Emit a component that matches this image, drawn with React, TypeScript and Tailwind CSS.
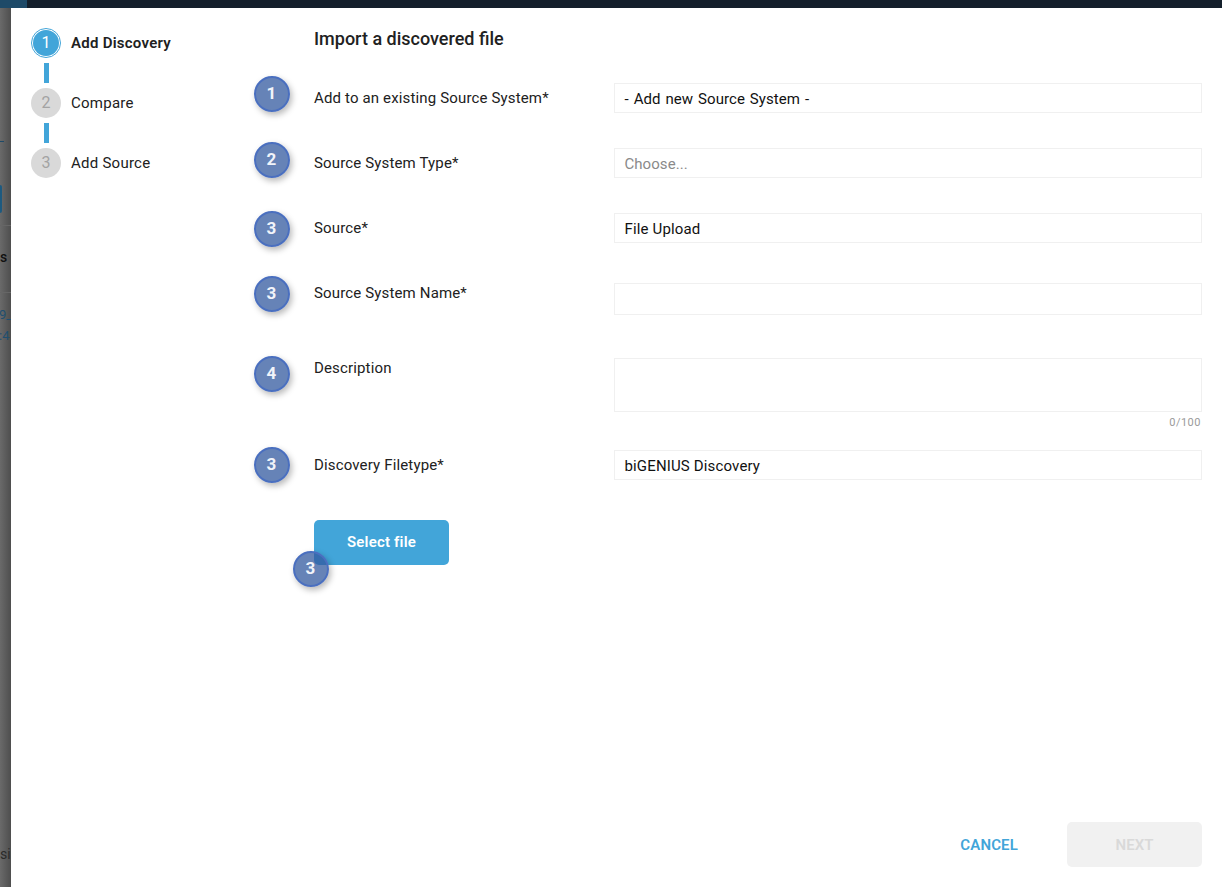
import React from "react";

function Badge({ n, className = "" }: { n: number; className?: string }) {
  return (
    <div
      className={
        "flex h-[36px] w-[36px] shrink-0 items-center justify-center rounded-full border-2 border-[#4a6fbf] bg-[#33599f]/75 pr-[1px] text-[17px] font-bold text-[#f1f4fa] shadow-[2px_3px_6px_rgba(0,0,0,0.28)] " +
        className
      }
    >
      {n}
    </div>
  );
}

function Step({ n, label, active }: { n: number; label: string; active?: boolean }) {
  return (
    <div className="flex h-[30px] items-center">
      {active ? (
        <div className="flex h-[30px] w-[30px] items-center justify-center rounded-full border border-[#42a5d9] bg-white">
          <div className="flex h-[26px] w-[26px] items-center justify-center rounded-full bg-[#42a5d9] text-[16px] text-white">{n}</div>
        </div>
      ) : (
        <div className="flex h-[30px] w-[30px] items-center justify-center rounded-full bg-[#d9d9d9] text-[16px] text-[#a3a3a3]">{n}</div>
      )}
      <span className={"ml-[10px] text-[15px] tracking-[0.25px] text-[#212121] " + (active ? "font-semibold" : "")}>{label}</span>
    </div>
  );
}

function Connector() {
  return <div className="my-[5px] ml-[13px] h-[20px] w-[5px] bg-[#42a5d9]" />;
}

function Row({
  n,
  label,
  value,
  placeholder,
  badgeClass,
  labelClass,
  rowClass,
  fieldClass,
}: {
  n: number;
  label: string;
  value?: string;
  placeholder?: string;
  badgeClass: string;
  labelClass: string;
  rowClass: string;
  fieldClass: string;
}) {
  return (
    <div className={"flex items-start " + rowClass}>
      <div className="w-[60px]">
        <Badge n={n} className={badgeClass} />
      </div>
      <div className={"w-[300px] text-[15px] leading-[20px] tracking-[0.15px] text-[#212121] " + labelClass}>{label}</div>
      <div
        className={
          "w-[588px] whitespace-pre border border-[#f0f0f0] pl-[9.5px] pt-[2px] text-[15px] " +
          (placeholder ? "text-[#8a8a8a] " : "text-[#111111] ") +
          fieldClass
        }
      >
        {value ?? placeholder}
      </div>
    </div>
  );
}

export default function App() {
  return (
    <div className="flex h-[887px] w-[1222px] flex-col overflow-hidden bg-white font-['Roboto',sans-serif]">
      <div className="flex h-[8px] shrink-0 bg-[#141f2b]">
        <div className="h-full w-[27px] bg-[#1e4a68]" />
      </div>
      <div className="flex flex-1">
        <div className="w-[11px] shrink-0 overflow-hidden bg-gradient-to-r from-[#6a6a6a] to-[#4e4e4e]">
          <div className="mt-[133px] h-[1px] w-[4px] bg-[#1d4a68]" />
          <div className="mt-[43px] h-[28px] w-[2px] rounded-r-sm bg-[#1d5a80]" />
          <div className="mt-[12px] h-[1px] w-full bg-[#666]" />
          <div className="mt-[21px] text-[14px] font-medium leading-[20px] text-[#111]">s</div>
          <div className="mt-[25px] h-[1px] w-full bg-[#666]" />
          <div className="mt-[11px] -ml-[1px] text-[13px] leading-[21px] text-[#1f4f70] whitespace-nowrap">9_<br />:4</div>
          <div className="mt-[498px] text-[14px] text-[#2a2a2a]">si</div>
        </div>

        <div className="relative flex flex-1">
          <div className="w-[243px] shrink-0 pl-[20px] pt-[20px]">
            <Step n={1} label="Add Discovery" active />
            <Connector />
            <Step n={2} label="Compare" />
            <Connector />
            <Step n={3} label="Add Source" />
          </div>

          <div className="flex flex-1 flex-col">
            <div className="pl-[60px] pt-[20px] text-[18px] font-medium leading-[22px] text-[#212121]">Import a discovered file</div>

            <Row n={1} label="Add to an existing Source System*" value="- Add new Source System -" rowClass="mt-[33px]" badgeClass="-mt-[7px]" labelClass="mt-[5px]" fieldClass="h-[30px] leading-[26px] tracking-[0.05px] [word-spacing:1.2px]" />
            <Row n={2} label="Source System Type*" placeholder="Choose..." rowClass="mt-[35px]" badgeClass="-mt-[6px]" labelClass="mt-[5px]" fieldClass="h-[30px] leading-[26px] tracking-[0.05px]" />
            <Row n={3} label="Source*" value="File Upload" rowClass="mt-[35px]" badgeClass="-mt-[2px]" labelClass="mt-[5px]" fieldClass="h-[30px] leading-[26px] tracking-[0.15px]" />
            <Row n={3} label="Source System Name*" rowClass="mt-[36px]" badgeClass="-mt-[7px]" labelClass="mt-0" fieldClass="h-[32px]" />
            <div className="relative">
              <Row n={4} label="Description" rowClass="mt-[43px]" badgeClass="-mt-[2px]" labelClass="mt-0" fieldClass="h-[54px]" />
              <div className="mr-[21px] mt-[4px] text-right text-[11px] leading-[13px] tracking-[0.5px] text-[#9a9a9a]">0/100</div>
            </div>
            <Row n={3} label="Discovery Filetype*" value="biGENIUS Discovery" rowClass="mt-[21px]" badgeClass="-mt-[3px]" labelClass="mt-[5px]" fieldClass="h-[30px] leading-[26px] tracking-[0.15px]" />

            <div className="relative ml-[60px] mt-[37px] w-[135px]">
              <button className="h-[45px] w-[135px] rounded-[5px] bg-[#42a5d9] text-[15px] font-semibold tracking-[0.2px] text-white">Select file</button>
              <Badge n={3} className="absolute left-[-21px] top-[31px]" />
            </div>

            <div className="mt-auto mb-[20px] mr-[20px] flex items-center justify-end">
              <button className="mr-[49px] pt-[1px] text-[15px] font-semibold tracking-[0.15px] text-[#42a5d9]">CANCEL</button>
              <button className="h-[45px] w-[135px] rounded-[5px] bg-[#f1f1f1] pt-[1px] text-[15px] font-semibold text-[#d9d9d9]">NEXT</button>
            </div>
          </div>
        </div>
      </div>
    </div>
  );
}
